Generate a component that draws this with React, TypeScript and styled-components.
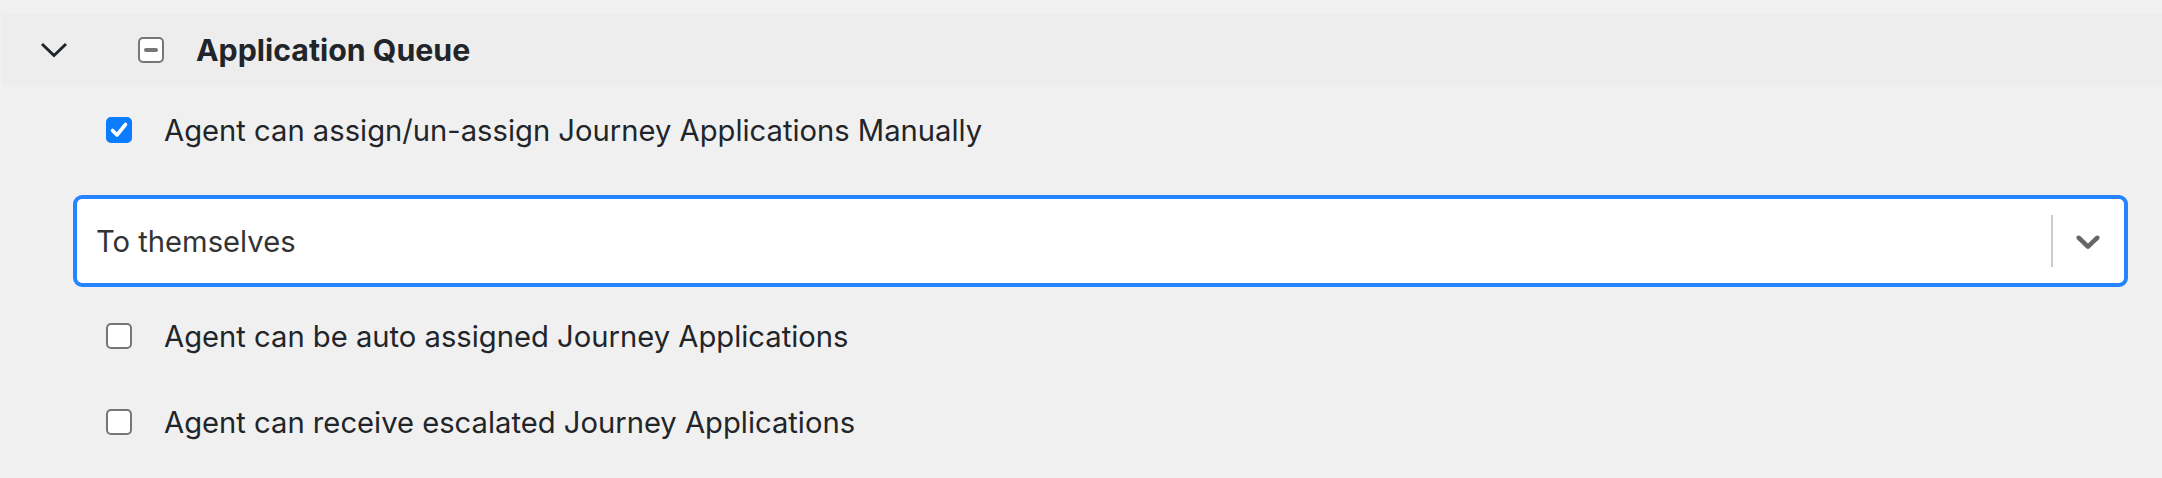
import React from 'react'
import styled, { createGlobalStyle } from 'styled-components'

const GlobalStyle = createGlobalStyle`
  html, body {
    margin: 0;
    padding: 0;
    background: #f0f0f0;
  }
  body {
    font-family: Inter, "Liberation Sans", Arial, sans-serif;
    color: #212529;
  }
`

const Page = styled.div`
  padding-top: 14px;
  min-height: 464px;
  background: #f0f0f0;
`

const Header = styled.div`
  display: flex;
  align-items: center;
  height: 71px;
  margin-left: 2px;
  padding-left: 38px;
  background: #ededed;
`

const Caret = styled.svg`
  width: 28px;
  height: 16px;
  flex-shrink: 0;
`

const MinusBox = styled.span`
  display: flex;
  align-items: center;
  justify-content: center;
  box-sizing: border-box;
  width: 26px;
  height: 26px;
  margin-left: 70px;
  border: 2px solid #767676;
  border-radius: 5px;
  background: #fff;
  &::after {
    content: '';
    width: 14px;
    height: 4px;
    border-radius: 2px;
    background: #767676;
  }
`

const Title = styled.span`
  margin-left: 32px;
  font-size: 30.3px;
  font-weight: 700;
  color: #212529;
`

const CheckRow = styled.label<{ $top: number }>`
  display: flex;
  align-items: center;
  height: 52px;
  margin-top: ${p => p.$top}px;
  padding-left: 106px;
  gap: 32px;
  font-size: 29.2px;
  color: #212529;
`

const Box = styled.span<{ $checked?: boolean }>`
  display: flex;
  align-items: center;
  justify-content: center;
  box-sizing: border-box;
  width: 26px;
  height: 26px;
  flex-shrink: 0;
  border-radius: 5px;
  border: 2px solid ${p => (p.$checked ? '#0a7cff' : '#767676')};
  background: ${p => (p.$checked ? '#0a7cff' : '#fff')};
`

const Select = styled.div`
  display: flex;
  align-items: center;
  box-sizing: border-box;
  height: 92px;
  margin: 39px 34px 0 73px;
  border: 4px solid #2684ff;
  border-radius: 9px;
  background: #fff;
`

const Value = styled.div`
  flex: 1;
  padding-left: 19px;
  font-size: 29.2px;
  color: #333;
`

const Separator = styled.span`
  align-self: stretch;
  width: 2px;
  margin: 16px 0;
  background: #ccc;
`

const Indicator = styled.div`
  display: flex;
  padding: 0 16px 0 15px;
  color: #666;
`

const Checkbox: React.FC<{ checked?: boolean }> = ({ checked }) => (
  <Box $checked={checked}>
    {checked && (
      <svg width="22" height="22" viewBox="0 0 22 22">
        <path d="M4.5 11.5 L9 16 L17.5 5.5" fill="none" stroke="#fff" strokeWidth="3.6" strokeLinecap="round" strokeLinejoin="round" />
      </svg>
    )}
  </Box>
)

export default function App() {
  return (
    <Page>
      <GlobalStyle />
      <Header>
        <Caret viewBox="0 0 28 16">
          <polyline points="2,2 14,13.5 26,2" fill="none" stroke="#212529" strokeWidth="3" />
        </Caret>
        <MinusBox />
        <Title>Application Queue</Title>
      </Header>

      <CheckRow $top={19}>
        <Checkbox checked />
        Agent can assign/un-assign Journey Applications Manually
      </CheckRow>

      <Select>
        <Value>To themselves</Value>
        <Separator />
        <Indicator>
          <svg width="40" height="40" viewBox="0 0 20 20" fill="currentColor">
            <path d="M4.516 7.548c0.436-0.446 1.043-0.481 1.576 0l3.908 3.747 3.908-3.747c0.533-0.481 1.141-0.446 1.574 0 0.436 0.445 0.408 1.197 0 1.615-0.406 0.418-4.695 4.502-4.695 4.502-0.217 0.223-0.502 0.335-0.787 0.335s-0.57-0.112-0.789-0.335c0 0-4.287-4.084-4.695-4.502s-0.436-1.17 0-1.615z" />
          </svg>
        </Indicator>
      </Select>

      <CheckRow $top={23}>
        <Checkbox />
        Agent can be auto assigned Journey Applications
      </CheckRow>

      <CheckRow $top={34}>
        <Checkbox />
        Agent can receive escalated Journey Applications
      </CheckRow>
    </Page>
  )
}
